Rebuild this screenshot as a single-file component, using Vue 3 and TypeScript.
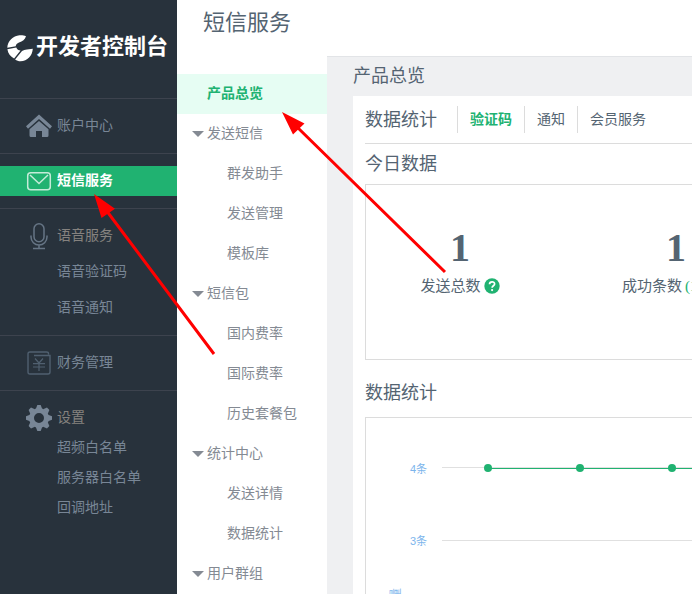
<script setup lang="ts">
interface SideItem { label: string; muted?: boolean; active?: boolean; icon?: string }
interface SideGroup { items: SideItem[]; tall?: boolean }
interface SubGroup { label: string; children: string[] }

const sideGroups: SideGroup[] = [
  { items: [{ label: '账户中心', icon: 'home' }] },
  { items: [{ label: '短信服务', icon: 'mail', active: true }] },
  {
    tall: true,
    items: [
      { label: '语音服务', icon: 'mic', muted: true },
      { label: '语音验证码' },
      { label: '语音通知' },
    ],
  },
  { items: [{ label: '财务管理', icon: 'money' }] },
  {
    items: [
      { label: '设置', icon: 'gear', muted: true },
      { label: '超频白名单' },
      { label: '服务器白名单' },
      { label: '回调地址' },
    ],
  },
]

const subGroups: SubGroup[] = [
  { label: '发送短信', children: ['群发助手', '发送管理', '模板库'] },
  { label: '短信包', children: ['国内费率', '国际费率', '历史套餐包'] },
  { label: '统计中心', children: ['发送详情', '数据统计'] },
  { label: '用户群组', children: [] },
]

const tabs = ['验证码', '通知', '会员服务']
const stats = [
  { value: 1, label: '发送总数', help: true },
  { value: 1, label: '成功条数', rate: '(100%)' },
]
const points = Array.from({ length: 12 }, (_, i) => 122 + i * 92)
const teeth = [0, 45, 90, 135, 180, 225, 270, 315]
</script>

<template>
  <div class="page">
    <aside class="sidebar">
      <div class="brand">
        <svg class="brand-mark" width="26" height="27" viewBox="0 0 26 27" aria-hidden="true">
          <path d="M.3 12.800C.6 6 6 .8 12.500.3 15 .1 17.300.5 19 1.300 18 4.500 15.500 6.500 12 7.600 10 8.400 9 9.500 8.700 11.200z" />
          <path d="M.4 14.200L9.300 12.400C10 14.200 11.500 15.300 13.500 15.600L7.100 23.400C3.400 21.600 1 18.400.4 14.200z" />
          <path d="M25.800 13.700C25.300 20.700 20.500 26.100 13.500 26.300 11.500 26.300 9.700 25.700 8.100 24.500L15 16.100C16.500 14.800 18 14.500 20 14.400z" />
        </svg>
        <span class="label">开发者控制台</span>
      </div>
      <ul v-for="(group, g) in sideGroups" :key="g" class="side-group" :class="{ tall: group.tall }">
        <li v-for="item in group.items" :key="item.label">
          <a href="#" class="side-link" :class="{ active: item.active, muted: item.muted }">
            <span class="side-icon">
              <svg v-if="item.icon === 'home'" width="26" height="24" viewBox="0 0 26 24" fill="#788696">
                <path d="M13 .5L26 12.300l-2 2.500L13 5 2 14.800 0 12.300z" />
                <path d="M13 7l9.500 8.300v6.200q0 1.500-1.500 1.500H16v-6h-6v6H5Q3.500 23 3.500 21.500v-6.200z" />
              </svg>
              <svg v-else-if="item.icon === 'mail'" width="26" height="24" viewBox="0 0 26 24" fill="none" stroke="#c5ebd9" stroke-width="1.500">
                <rect x="1.700" y="3.700" width="22.600" height="17" rx="3" />
                <path d="M4 6l9 8.500L22 6" />
              </svg>
              <svg v-else-if="item.icon === 'mic'" width="26" height="28" viewBox="0 0 26 28" fill="none" stroke="#667585" stroke-width="1.500">
                <rect x="8" y="1.700" width="10" height="18" rx="5" />
                <path d="M5 13.500v1.500a8 8 0 0 0 16 0v-1.500M13 23v3.500M7 26.600h12" />
              </svg>
              <svg v-else-if="item.icon === 'money'" width="26" height="26" viewBox="0 0 26 26" fill="none" stroke="#506070" stroke-width="1.400">
                <path d="M8 5.500h16v16.500q0 2-2 2H4q-2 0-2-2V4q0-2 2-2h16.500q2 0 2 1.500v1" />
                <path stroke-width="1.200" d="M9 8.500l4 4.500 4-4.500M7 13.700h12M7 17h12M13 13v8" />
              </svg>
              <svg v-else-if="item.icon === 'gear'" width="26" height="26" viewBox="-13 -13 26 26">
                <circle r="7.500" fill="none" stroke="#788696" stroke-width="5" />
                <path v-for="t in teeth" :key="t" :transform="`rotate(${t})`" d="M-3.200-9L-1.700-13H1.700L3.200-9z" fill="#788696" />
              </svg>
            </span>
            <span class="label">{{ item.label }}</span>
          </a>
        </li>
      </ul>
    </aside>

    <nav class="subnav">
      <h1>短信服务</h1>
      <a href="#" class="sub-link current"><span class="label">产品总览</span></a>
      <template v-for="group in subGroups" :key="group.label">
        <button type="button" class="sub-toggle"><i class="caret"></i><span class="label">{{ group.label }}</span></button>
        <a v-for="child in group.children" :key="child" href="#" class="sub-link child"><span class="label">{{ child }}</span></a>
      </template>
    </nav>

    <main class="main">
      <h2>产品总览</h2>
      <section class="card">
        <header class="card-head">
          <h3>数据统计</h3>
          <button v-for="(tab, i) in tabs" :key="tab" type="button" class="tab" :class="{ on: i === 0 }">{{ tab }}</button>
        </header>
        <h3>今日数据</h3>
        <div class="stats">
          <div v-for="stat in stats" :key="stat.label" class="stat">
            <strong>{{ stat.value }}</strong>
            <p>
              {{ stat.label }}
              <svg v-if="stat.help" width="16" height="16" viewBox="0 0 16 16" aria-hidden="true">
                <circle cx="8" cy="8" r="7.700" fill="#20b271" />
                <path d="M5.500 6.300c.1-3.300 5.200-3.100 5.100-.3 0 1.700-2.500 1.900-2.500 3.800" fill="none" stroke="#fff" stroke-width="1.700" />
                <circle cx="8.100" cy="12.100" r="1.100" fill="#fff" />
              </svg>
              <em v-if="stat.rate">{{ stat.rate }}</em>
            </p>
          </div>
        </div>
        <h3 class="chart-title">数据统计</h3>
        <div class="chart">
          <svg width="100%" height="340">
            <g class="grid-lines">
              <line x1="76" y1="49.500" x2="100%" y2="49.500" />
              <line x1="76" y1="122.500" x2="100%" y2="122.500" />
            </g>
            <g class="axis">
              <text x="61" y="55" text-anchor="end">4条</text>
              <text x="61" y="127" text-anchor="end">3条</text>
              <text transform="translate(34 170) rotate(-90)" text-anchor="end" class="axis-name">发送数量</text>
            </g>
            <g class="series">
              <line x1="122" y1="50.500" x2="100%" y2="50.500" />
              <circle v-for="x in points" :key="x" :cx="x" cy="50" r="4" />
            </g>
          </svg>
        </div>
      </section>
    </main>

    <svg class="arrows" aria-hidden="true">
      <path class="shaft" d="M214 354L106 210M445 272L296 126" />
      <path class="head" d="M94 194L115 208.700 101.500 218zM282 112L304.500 123.500 293 134.500z" />
    </svg>
  </div>
</template>

<style>
html, body { margin: 0; }
body { overflow: hidden; }
</style>

<style scoped>
.page {
  position: relative;
  display: grid;
  grid-template-columns: 177px 150px minmax(0, 1fr);
  height: 100vh;
  overflow: hidden;
  background: #fff;
  color: #546472;
  font: 14px/20px "Liberation Sans", "Noto Sans CJK SC", sans-serif;
}
h1, h2, h3, p, ul { margin: 0; padding: 0; font-weight: 400; }
ul { list-style: none; }
a { text-decoration: none; }
button { border: 0; background: none; font: inherit; color: inherit; cursor: pointer; }
.label { padding-bottom: 2px; }

.sidebar { background: #28323c; color: #788696; }
.brand {
  display: flex;
  align-items: center;
  gap: 3px;
  height: 98px;
  padding: 0 0 2px 7px;
  box-sizing: border-box;
  color: #fff;
  font-size: 22px;
  font-weight: 700;
  white-space: nowrap;
}
.brand-mark { fill: #fff; flex: none; }
.side-group { padding: 12px 0; border-top: 1px solid #3d434e; }
.side-link { display: flex; align-items: center; height: 30px; color: #788696; }
.side-group.tall { padding: 9px 0; }
.tall .side-link { height: 36px; }
.side-link.muted { color: #85827f; }
.side-link.active { background: #20b271; color: #fff; font-weight: 700; }
.side-icon { display: flex; justify-content: center; width: 26px; margin: 0 5px 0 26px; }
.side-icon svg { flex: none; }

.subnav h1 { height: 74px; padding-left: 26px; box-sizing: border-box; font-size: 22px; line-height: 46px; }
.sub-link, .sub-toggle { display: flex; align-items: center; width: 100%; height: 40px; box-sizing: border-box; color: #848a93; }
.sub-link { padding-left: 30px; }
.sub-link.child { padding-left: 50px; }
.sub-link.current { background: #e6fdf3; color: #20b271; font-weight: 700; }
.sub-toggle { gap: 3px; padding: 0 0 0 15px; }
.caret { border: 6px solid transparent; border-top-color: #848a93; border-bottom: 0; }

.main { margin-top: 56px; padding-left: 26px; border-top: 1px solid #e2e4e7; background: #eff0f2; }
.main h2 { font-size: 18px; line-height: 39px; }
.card { padding-left: 12px; background: #fff; }
.card h3 { font-size: 18px; line-height: 40px; }
.card-head { display: flex; align-items: center; height: 47px; border-bottom: 1px solid #dcdcdc; }
.card-head h3 { margin-right: 20px; }
.tab { height: 27px; padding: 0 12px 2px; border-left: 1px solid #dcdcdc; white-space: nowrap; }
.tab.on { color: #20b271; font-weight: 700; }
.stats { display: flex; gap: 28px; height: 174px; overflow: hidden; border: 1px solid #dcdcdc; border-right: 0; }
.stat { flex: none; width: 188px; padding-top: 41px; text-align: center; }
.stat strong { display: block; font: 700 40px/44px "Liberation Serif", serif; }
.stat p { display: flex; justify-content: center; align-items: center; gap: 3px; margin-top: 6px; font-size: 15px; white-space: nowrap; }
.stat em { color: #20b271; font-style: normal; font-family: "Liberation Serif", serif; }
.card .chart-title { padding: 13px 0 4px; }
.chart { border: 1px solid #dcdcdc; border-right: 0; }
.chart svg { display: block; }
.grid-lines { stroke: #e0e0e0; }
.axis { fill: #7cb5ec; font-size: 11px; }
.axis-name { font-size: 12px; }
.series { stroke: #20b271; fill: #20b271; }
.series circle { stroke: none; }

.arrows { position: absolute; top: 0; left: 0; width: 100%; height: 100%; pointer-events: none; }
.shaft { stroke: #f00; stroke-width: 3; }
.head { fill: #f00; }
</style>
